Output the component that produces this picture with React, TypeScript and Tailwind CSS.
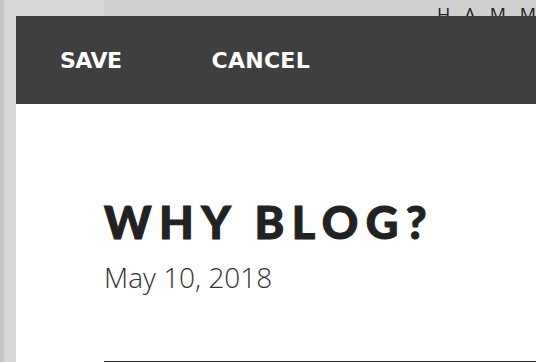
export default function App() {
  return (
    <div className="w-[536px] h-[362px] overflow-hidden bg-[#d8d8d8] border-l-4 border-[#c4c5c7] flex flex-col">
      <div className="h-4 flex shrink-0">
        <div className="w-[100px] shrink-0" />
        <div className="flex-1 min-w-0 bg-[#cfcfcf] pl-[333px]">
          <div className="text-[18px] leading-none pt-[5px] tracking-[14px] text-[#222] whitespace-nowrap" style={{ fontFamily: '"Open Sans", sans-serif' }}>
            HAMMER
          </div>
        </div>
      </div>
      <div className="relative z-10 ml-3 flex-1 bg-white flex flex-col">
        <div className="h-[88px] shrink-0 bg-[#3f3f3f] flex items-center pl-11 gap-[90px] text-white font-bold text-[22px]" style={{ fontFamily: '"DejaVu Sans", sans-serif' }}>
          <span className="tracking-[-0.5px]">SAVE</span>
          <span className="tracking-[0.3px]">CANCEL</span>
        </div>
        <div className="pl-[88px] pt-[96px]">
          <h1 className="text-[#222] text-[45px] leading-none font-black tracking-[0.165em]" style={{ fontFamily: 'Lato, sans-serif', WebkitTextStroke: '1px #222' }}>
            WHY BLOG?
          </h1>
          <p className="mt-[18px] text-[#333] text-[28px] leading-none font-light" style={{ fontFamily: '"Open Sans", sans-serif' }}>
            May 10, 2018
          </p>
          <div className="mt-[70px] h-[4px] bg-[#2a2d2a]" />
        </div>
      </div>
    </div>
  )
}
